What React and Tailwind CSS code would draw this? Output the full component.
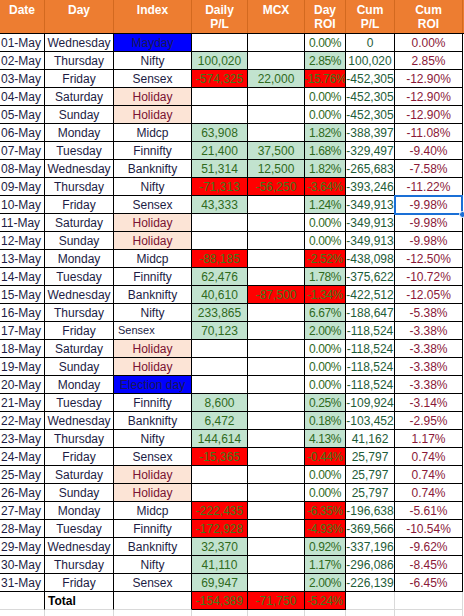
const cols = ["w-[45px]", "w-[69px]", "w-[78px]", "w-[56px]", "w-[57px]", "w-[41px]", "w-[49px]", "w-[68px]"];

const G = "g";
const R = "r";

// date, day, index, daily, dailyFill, mcx, mcxFill, roi, roiFill, cumPL, cumROI
const rows = [
  ["01-May", "Wednesday", "Mayday", "", "", "", "", "0.00%", "", "0", "0.00%"],
  ["02-May", "Thursday", "Nifty", "100,020", G, "", "", "2.85%", G, "100,020", "2.85%"],
  ["03-May", "Friday", "Sensex", "-574,325", R, "22,000", G, "-15.76%", R, "-452,305", "-12.90%"],
  ["04-May", "Saturday", "Holiday", "", "", "", "", "0.00%", "", "-452,305", "-12.90%"],
  ["05-May", "Sunday", "Holiday", "", "", "", "", "0.00%", "", "-452,305", "-12.90%"],
  ["06-May", "Monday", "Midcp", "63,908", G, "", "", "1.82%", G, "-388,397", "-11.08%"],
  ["07-May", "Tuesday", "Finnifty", "21,400", G, "37,500", G, "1.68%", G, "-329,497", "-9.40%"],
  ["08-May", "Wednesday", "Banknifty", "51,314", G, "12,500", G, "1.82%", G, "-265,683", "-7.58%"],
  ["09-May", "Thursday", "Nifty", "-71,313", R, "-56,250", R, "-3.64%", R, "-393,246", "-11.22%"],
  ["10-May", "Friday", "Sensex", "43,333", G, "", "", "1.24%", G, "-349,913", "-9.98%"],
  ["11-May", "Saturday", "Holiday", "", "", "", "", "0.00%", "", "-349,913", "-9.98%"],
  ["12-May", "Sunday", "Holiday", "", "", "", "", "0.00%", "", "-349,913", "-9.98%"],
  ["13-May", "Monday", "Midcp", "-88,185", R, "", "", "-2.52%", R, "-438,098", "-12.50%"],
  ["14-May", "Tuesday", "Finnifty", "62,476", G, "", "", "1.78%", G, "-375,622", "-10.72%"],
  ["15-May", "Wednesday", "Banknifty", "40,610", G, "-87,500", R, "-1.34%", R, "-422,512", "-12.05%"],
  ["16-May", "Thursday", "Nifty", "233,865", G, "", "", "6.67%", G, "-188,647", "-5.38%"],
  ["17-May", "Friday", "Sensex", "70,123", G, "", "", "2.00%", G, "-118,524", "-3.38%"],
  ["18-May", "Saturday", "Holiday", "", "", "", "", "0.00%", "", "-118,524", "-3.38%"],
  ["19-May", "Sunday", "Holiday", "", "", "", "", "0.00%", "", "-118,524", "-3.38%"],
  ["20-May", "Monday", "Election day", "", "", "", "", "0.00%", "", "-118,524", "-3.38%"],
  ["21-May", "Tuesday", "Finnifty", "8,600", G, "", "", "0.25%", G, "-109,924", "-3.14%"],
  ["22-May", "Wednesday", "Banknifty", "6,472", G, "", "", "0.18%", G, "-103,452", "-2.95%"],
  ["23-May", "Thursday", "Nifty", "144,614", G, "", "", "4.13%", G, "41,162", "1.17%"],
  ["24-May", "Friday", "Sensex", "-15,365", R, "", "", "-0.44%", R, "25,797", "0.74%"],
  ["25-May", "Saturday", "Holiday", "", "", "", "", "0.00%", "", "25,797", "0.74%"],
  ["26-May", "Sunday", "Holiday", "", "", "", "", "0.00%", "", "25,797", "0.74%"],
  ["27-May", "Monday", "Midcp", "-222,435", R, "", "", "-6.35%", R, "-196,638", "-5.61%"],
  ["28-May", "Tuesday", "Finnifty", "-172,928", R, "", "", "-4.93%", R, "-369,566", "-10.54%"],
  ["29-May", "Wednesday", "Banknifty", "32,370", G, "", "", "0.92%", G, "-337,196", "-9.62%"],
  ["30-May", "Thursday", "Nifty", "41,110", G, "", "", "1.17%", G, "-296,086", "-8.45%"],
  ["31-May", "Friday", "Sensex", "69,947", G, "", "", "2.00%", G, "-226,139", "-6.45%"],
];

const fillClass = (f) =>
  f === G ? "bg-[#c2e3cf] text-[#2f6a1c]" : f === R ? "bg-[#ff0000] text-[#3f7a1a]" : "bg-white text-[#2f6a1c]";

const Cell = ({ w, className = "", children }) => (
  <div
    className={`${w} h-[18px] shrink-0 flex items-center justify-center overflow-hidden whitespace-nowrap border-r border-b border-black ${className}`}
  >
    {children}
  </div>
);

const indexClass = (name) => {
  if (name === "Holiday") return "bg-[#fce4d6] text-[#7a1232]";
  if (name === "Mayday" || name === "Election day") return "bg-[#0000ff] text-[#1a1a55]";
  return "text-[#1c1c44]";
};

const Header = () => {
  const heads = ["Date", "Day", "Index", ["Daily", "P/L"], "MCX", ["Day", "ROI"], ["Cum", "P/L"], ["Cum", "ROI"]];
  return (
    <div className="flex h-[34px] bg-[#ed7d31] border-b border-black">
      {heads.map((h, i) => (
        <div
          key={i}
          className={`${cols[i]} shrink-0 border-r border-[#d3691f] pt-[3px] text-center text-[12px] font-bold leading-[14px] text-white`}
        >
          {Array.isArray(h) ? (
            <>
              <div>{h[0]}</div>
              <div>{h[1]}</div>
            </>
          ) : (
            h
          )}
        </div>
      ))}
    </div>
  );
};

export default function App() {
  return (
    <div className="relative w-[464px] h-[616px] overflow-hidden bg-white text-[12px] font-['Liberation_Sans',Arial,sans-serif]">
      <Header />
      {rows.map((r, i) => (
        <div key={i} className="flex">
          <Cell w={cols[0]} className="justify-start pl-[1px] text-[#1c1c44]">{r[0]}</Cell>
          <Cell w={cols[1]} className="text-[#1c1c44]">{r[1]}</Cell>
          <Cell
            w={cols[2]}
            className={`${indexClass(r[2])} ${i === 16 ? "justify-start pl-[4px] text-[11px]" : ""}`}
          >
            {r[2]}
          </Cell>
          <Cell w={cols[3]} className={fillClass(r[4])}>{r[3]}</Cell>
          <Cell w={cols[4]} className={fillClass(r[6])}>{r[5]}</Cell>
          <Cell w={cols[5]} className={`${fillClass(r[8])} tracking-[-0.4px]`}>{r[7]}</Cell>
          <Cell w={cols[6]} className="text-[#1e5c38]">{r[9]}</Cell>
          <Cell w={cols[7]} className="text-[#8a1838]">{r[10]}</Cell>
        </div>
      ))}
      <div className="flex">
        <Cell w={cols[0]} className="border-b-[#d9d9d9]" />
        <Cell w={cols[1]} className="justify-start pl-[3px] font-bold text-black border-b-[#d9d9d9]">Total</Cell>
        <Cell w={cols[2]} className="border-b-[#d9d9d9]" />
        <Cell w={cols[3]} className={fillClass(R)}>-154,389</Cell>
        <Cell w={cols[4]} className={fillClass(R)}>-71,750</Cell>
        <Cell w={cols[5]} className={`${fillClass(R)} tracking-[-0.4px]`}>-5.24%</Cell>
        <Cell w={cols[6]} className="border-r-[#d9d9d9] border-b-[#d9d9d9]" />
        <Cell w={cols[7]} className="border-r-[#d9d9d9] border-b-[#d9d9d9]" />
      </div>
      <div className="flex">
        {cols.map((c, i) => (
          <div key={i} className={`${c} h-[18px] shrink-0 border-r border-[#d9d9d9]`} />
        ))}
      </div>
      <div className="absolute left-[394px] top-[195px] w-[69px] h-[20px] border-2 border-[#1a6fd6]" />
      <div className="absolute left-[459px] top-[211px] w-[7px] h-[7px] rounded-full bg-[#1a6fd6] border border-white" />
    </div>
  );
}
